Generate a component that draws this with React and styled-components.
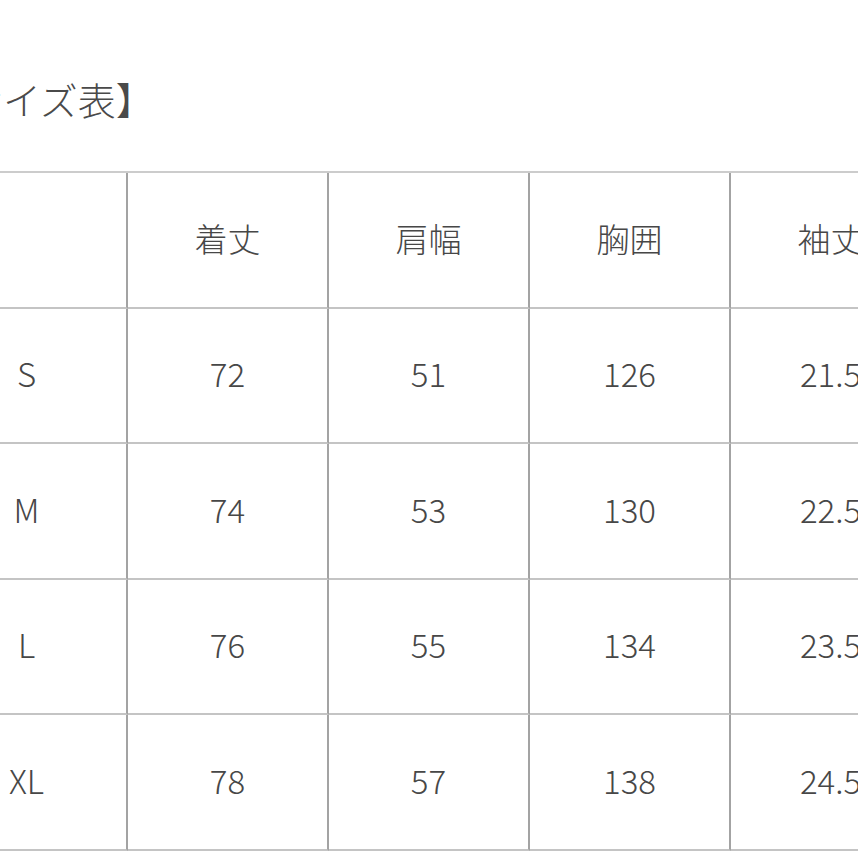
import React from "react";
import styled, { createGlobalStyle } from "styled-components";

const GlobalStyle = createGlobalStyle`
  html, body {
    margin: 0;
    padding: 0;
    background: #ffffff;
    overflow: hidden;
  }
  body {
    font-family: "Noto Sans CJK JP", "Noto Sans", sans-serif;
    color: #444444;
  }
`;

const headers = ["", "着丈", "肩幅", "胸囲", "袖丈"];

const rows = [
  ["S", "72", "51", "126", "21.5"],
  ["M", "74", "53", "130", "22.5"],
  ["L", "76", "55", "134", "23.5"],
  ["XL", "78", "57", "138", "24.5"],
];

export default function App() {
  return (
    <>
      <GlobalStyle />
      <Page>
        <Title>【サイズ表】</Title>
        <Table>
          {headers.map((h, i) => (
            <Cell key={"h" + i}>{h}</Cell>
          ))}
          {rows.map((row, r) =>
            row.map((value, c) => <Cell key={r + "-" + c}>{value}</Cell>)
          )}
        </Table>
      </Page>
    </>
  );
}

const Page = styled.div`
  width: 1100px;
  height: 858px;
  margin-left: -73px;
  padding-top: 74px;
  box-sizing: border-box;
`;

const Title = styled.h2`
  margin: 0;
  font-size: 38px;
  font-weight: 300;
  line-height: 50px;
  color: #4a4a4a;
`;

const Table = styled.div`
  display: grid;
  grid-template-columns: repeat(5, 201px);
  grid-auto-rows: 135.5px;
  margin-top: 47px;
  border-top: 2px solid #cccccc;
`;

const Cell = styled.div`
  display: flex;
  align-items: center;
  justify-content: center;
  box-sizing: border-box;
  border-right: 2px solid #a3a3a3;
  border-bottom: 2px solid #c4c4c4;
  font-size: 33px;
  font-weight: 300;
  color: #474747;
  padding-bottom: 4px;
`;
